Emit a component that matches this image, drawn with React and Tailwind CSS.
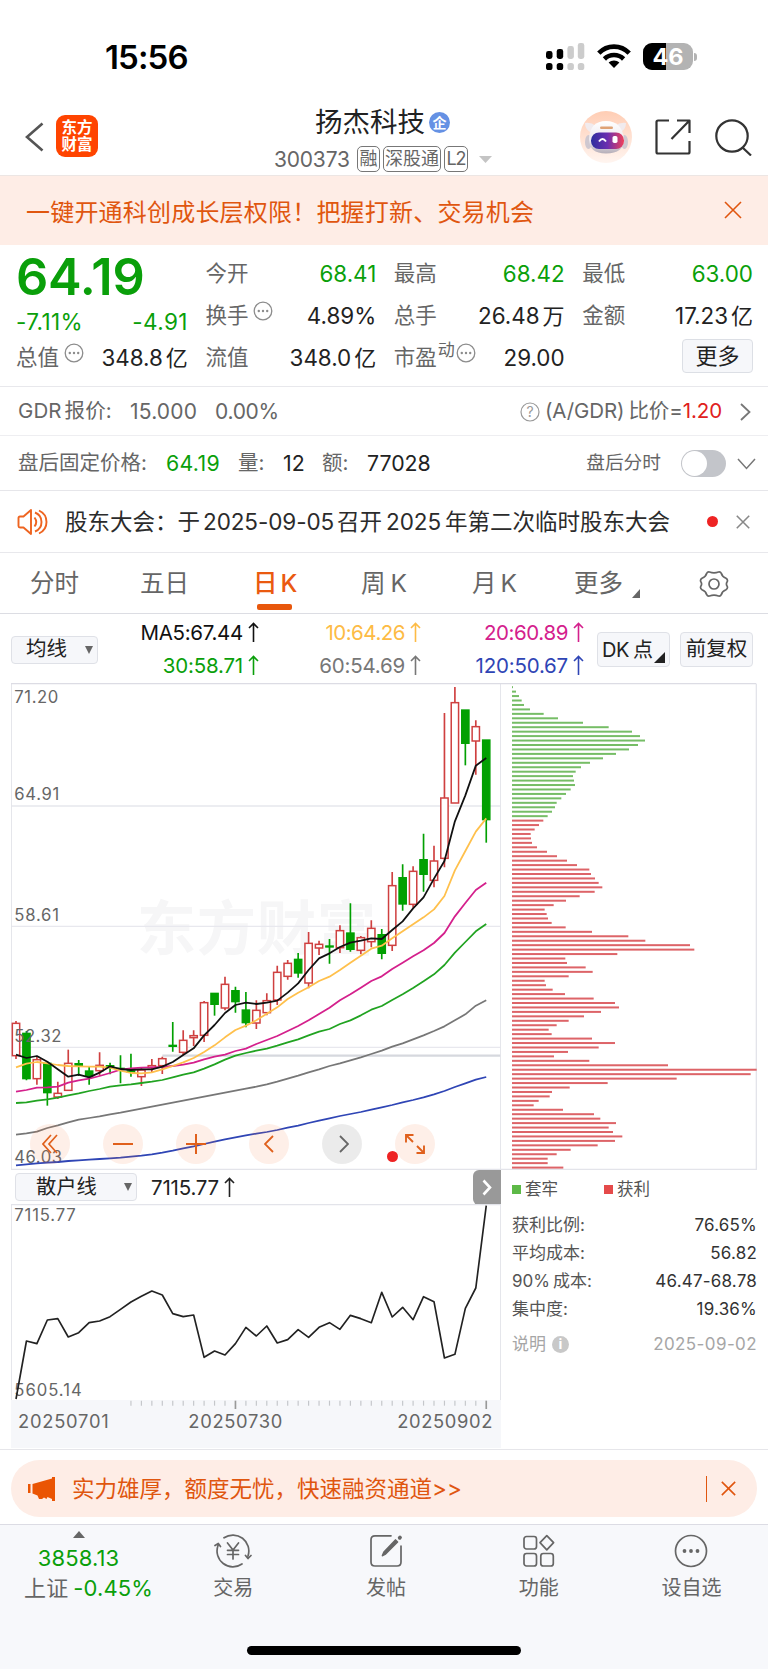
import React from 'react';

const STEP = 31.35;
const px = (i) => 48 + i * STEP;

// [high, top, bottom, low, rising]
const CANDLES = [
    [1023, 1030, 1127, 1137, 1], [1053, 1060, 1196, 1201, 0], [1130, 1139, 1196, 1214, 1], [1150, 1150, 1238, 1277, 0],
    [1205, 1240, 1251, 1257, 1], [1109, 1150, 1231, 1231, 1], [1140, 1151, 1156, 1188, 0], [1160, 1173, 1188, 1214, 0],
    [1117, 1156, 1172, 1187, 1], [1148, 1157, 1162, 1183, 0], [1126, 1165, 1168, 1210, 0], [1121, 1173, 1177, 1190, 0],
    [1165, 1170, 1190, 1218, 1], [1137, 1157, 1163, 1178, 1], [1130, 1136, 1157, 1182, 1], [1026, 1096, 1099, 1115, 0],
    [1051, 1081, 1117, 1125, 1], [1051, 1067, 1073, 1098, 1], [963, 968, 1066, 1086, 1], [940, 940, 973, 1007, 0],
    [890, 913, 984, 991, 1], [920, 932, 965, 998, 0], [936, 990, 1028, 1042, 0], [961, 991, 1029, 1047, 1],
    [940, 962, 998, 1006, 1], [857, 877, 960, 975, 1], [840, 850, 889, 899, 1], [819, 838, 879, 893, 0],
    [756, 790, 909, 925, 1], [782, 793, 804, 825, 1], [777, 798, 801, 851, 0], [736, 752, 803, 819, 1],
    [670, 759, 808, 815, 0], [768, 773, 811, 823, 1], [721, 745, 785, 802, 1], [747, 764, 820, 838, 0],
    [576, 617, 796, 813, 1], [553, 593, 672, 692, 0], [559, 574, 673, 683, 1], [461, 539, 583, 635, 0],
    [497, 543, 601, 622, 1], [99, 354, 535, 562, 1], [21, 68, 369, 369, 1], [90, 90, 190, 256, 0],
    [121, 140, 183, 284, 1], [180, 180, 419, 488, 0],
];

const AVERAGES = [
    { color: '#2f45b5', data: [1456, 1453, 1450, 1448, 1446, 1443, 1441, 1439, 1437, 1435, 1433, 1430, 1427, 1423, 1418, 1412, 1405, 1399, 1392, 1385, 1378, 1372, 1366, 1361, 1356, 1350, 1343, 1337, 1329, 1322, 1315, 1308, 1302, 1296, 1289, 1282, 1275, 1267, 1260, 1252, 1243, 1233, 1221, 1210, 1199, 1191] },
    { color: '#777777', data: [1364, 1360, 1355, 1344, 1336, 1327, 1319, 1314, 1309, 1303, 1298, 1292, 1286, 1280, 1274, 1268, 1262, 1256, 1250, 1244, 1238, 1232, 1226, 1220, 1213, 1205, 1196, 1187, 1177, 1168, 1158, 1150, 1141, 1132, 1122, 1112, 1100, 1090, 1078, 1066, 1053, 1039, 1021, 1003, 977, 961] },
    { color: '#21a321', data: [1269, 1267, 1262, 1258, 1253, 1246, 1240, 1233, 1227, 1220, 1216, 1213, 1209, 1205, 1200, 1192, 1184, 1177, 1166, 1153, 1139, 1127, 1119, 1112, 1106, 1097, 1087, 1078, 1066, 1055, 1047, 1032, 1021, 1006, 989, 978, 960, 943, 924, 904, 883, 855, 818, 786, 754, 732] },
    { color: '#d4208c', data: [1235, 1230, 1223, 1222, 1220, 1208, 1201, 1196, 1188, 1179, 1169, 1165, 1163, 1162, 1161, 1158, 1154, 1148, 1138, 1130, 1124, 1113, 1106, 1092, 1080, 1068, 1053, 1038, 1021, 1002, 983, 961, 943, 923, 903, 889, 867, 848, 829, 811, 789, 759, 709, 669, 630, 608] },
    { color: '#ffc04c', data: [1162, 1151, 1146, 1150, 1155, 1158, 1159, 1160, 1160, 1163, 1172, 1179, 1180, 1177, 1168, 1158, 1147, 1134, 1116, 1096, 1072, 1050, 1037, 1021, 1001, 982, 957, 938, 922, 903, 890, 870, 848, 827, 806, 797, 775, 754, 733, 712, 688, 648, 571, 513, 455, 415] },
    { color: '#111111', data: [1124, 1134, 1128, 1145, 1168, 1190, 1184, 1192, 1178, 1159, 1167, 1170, 1168, 1168, 1160, 1146, 1125, 1105, 1066, 1035, 999, 975, 968, 972, 968, 962, 938, 910, 870, 835, 820, 801, 788, 782, 775, 777, 750, 724, 685, 652, 596, 543, 424, 346, 257, 234] },
];

const RETAIL = [717, 543, 551, 480, 476, 531, 518, 488, 483, 470, 448, 426, 409, 393, 405, 461, 470, 465, 592, 573, 585, 551, 502, 528, 498, 549, 539, 509, 532, 502, 488, 508, 466, 476, 488, 397, 471, 442, 479, 410, 425, 594, 583, 445, 384, 137];

const CHIPS = [
    3, 12, 21, 29, 36, 54, 95, 138, 213, 290, 360, 384, 399, 378, 351, 312, 273, 234, 207, 191, 183, 186, 189, 176, 162, 148, 134, 129, 120, 107,
    94, 81, 68, 56, 57, 60, 75, 105, 135, 165, 195, 232, 237, 249, 260, 271, 248, 203, 162, 125, 98, 104, 108, 119, 161,
    240, 349, 400, 534, 547, 316, 160, 165, 221, 242, 170, 98, 102, 122, 159, 245, 309, 321, 267, 216, 170, 134, 110, 119, 240,
    309, 260, 168, 126, 232, 468, 734, 716, 494, 287, 173, 120, 113, 80, 65, 153, 246, 265, 312, 290, 303, 331, 309, 257, 176, 134, 107, 107, 154,
];

const toPoints = (data) => data.map((y, i) => `${px(i)},${y}`).join(' ');

const Close = ({ size, width = 1.6, className = '' }) => (
    <svg width={size} height={size} viewBox="0 0 18 18" fill="none" stroke="currentColor" strokeWidth={width} className={className}>
        <path d="M1 1L17 17M17 1L1 17" />
    </svg>
);

const Dots = ({ className = '' }) => (
    <svg width="20" height="20" viewBox="0 0 20 20" className={`text-[#8c8c8c] shrink-0 ${className}`}>
        <circle cx="10" cy="10" r="8.8" fill="none" stroke="currentColor" strokeWidth="1.3" />
        <circle cx="5.8" cy="10" r="1.2" fill="currentColor" />
        <circle cx="10" cy="10" r="1.2" fill="currentColor" />
        <circle cx="14.2" cy="10" r="1.2" fill="currentColor" />
    </svg>
);

const StatusBar = () => (
    <div className="h-[104px] flex items-start justify-between pl-[105px] pr-[71px] pt-[43px]">
        <div className="h-[28px] flex items-center text-[33px] font-semibold tracking-[-0.900px] text-black">15:56</div>
        <div className="flex items-start">
            <svg width="39" height="27" viewBox="0 0 39 27" className="mr-[12px]">
                <rect x="0" y="8" width="6.5" height="8" rx="2.4" />
                <rect x="10.7" y="6" width="6.5" height="10" rx="2.4" />
                <rect x="21.4" y="3" width="6.5" height="13" rx="2.4" fill="#cccccc" />
                <rect x="31.8" y="0" width="6.5" height="16" rx="2.4" fill="#cccccc" />
                <rect x="0" y="20" width="6.5" height="7" rx="2.6" />
                <rect x="10.7" y="20" width="6.5" height="7" rx="2.6" />
                <rect x="21.4" y="20" width="6.5" height="7" rx="2.6" fill="#cccccc" />
                <rect x="31.8" y="20" width="6.5" height="7" rx="2.6" fill="#cccccc" />
            </svg>
            <svg width="34" height="26" viewBox="0 0 34 26" fill="none" stroke="#000" strokeWidth="4.6" className="mr-[12px]">
                <path d="M1.8 10.2C10.2 1.4 23.8 1.4 32.2 10.2" />
                <path d="M7.4 16C12.7 10.7 21.3 10.7 26.6 16" />
                <path d="M17 25L11.6 19.6C14.6 16.8 19.4 16.8 22.4 19.6Z" fill="#000" stroke="none" />
            </svg>
            <div className="relative w-[50px] h-[27px] rounded-[9px] overflow-hidden bg-[#b3b3b3]">
                <div className="w-[23px] h-full bg-black" />
                <div className="absolute inset-0 pt-[1px] flex items-center justify-center text-[23.500px] font-bold text-white">46</div>
            </div>
            <div className="w-[3px] h-[8px] mt-[10px] ml-[1px] rounded-r-full bg-[#b3b3b3]" />
        </div>
    </div>
);

const Robot = () => (
    <svg width="52" height="52" viewBox="0 0 52 52">
        <defs>
            <linearGradient id="halo" x1="0" y1="0" x2="0" y2="1">
                <stop offset="0" stopColor="#ffcdb4" />
                <stop offset="1" stopColor="#fff5f0" />
            </linearGradient>
            <linearGradient id="visor" x1="0" y1="0" x2="1" y2="0">
                <stop offset="0" stopColor="#2c2f9e" />
                <stop offset="0.5" stopColor="#6b2fb0" />
                <stop offset="1" stopColor="#f0405a" />
            </linearGradient>
            <linearGradient id="shell" x1="0" y1="0" x2="0" y2="1">
                <stop offset="0" stopColor="#ffffff" />
                <stop offset="0.6" stopColor="#ece8ee" />
                <stop offset="1" stopColor="#b5aeb8" />
            </linearGradient>
        </defs>
        <circle cx="26" cy="26" r="26" fill="url(#halo)" />
        <path d="M5 12Q11 11 16 15L10 21Q5 18 5 12ZM46 12Q40 11 35 15L41 21Q46 18 46 12Z" fill="#f1ebee" />
        <ellipse cx="8.5" cy="31" rx="3.5" ry="7" fill="#cfc8d0" />
        <ellipse cx="44.5" cy="31" rx="3.5" ry="7" fill="#cfc8d0" />
        <path d="M9 28Q10 10 26 10Q42 10 44 28Q44 42.5 26 42.5Q9 42.5 9 28Z" fill="url(#shell)" />
        <rect x="20" y="15.5" width="13" height="2.6" rx="1.3" fill="#dfa275" />
        <rect x="11" y="21.5" width="33" height="16.5" rx="8" fill="url(#visor)" />
        <path d="M19 30.5Q22.5 25.5 26 30.5" fill="none" stroke="#fff" strokeWidth="1.9" />
        <rect x="32.5" y="25" width="5" height="7" rx="1.8" fill="#fff" />
    </svg>
);

const Header = () => (
    <div className="h-[71px] flex items-center justify-between pl-[25px] pr-[17px] relative">
        <div className="flex items-center">
            <svg width="19" height="30" viewBox="0 0 19 30" fill="none" stroke="#555" strokeWidth="2.6" className="mt-[-5px]">
                <path d="M17.5 1.5L2 15L17.5 28.5" />
            </svg>
            <div className="ml-[12px] mt-[-7px] w-[42px] h-[42px] rounded-[9px] bg-[#ff4400] text-white text-[15.500px] leading-[17.500px] font-bold flex flex-col items-center justify-center">
                <span>东方</span>
                <span>财富</span>
            </div>
        </div>
        <div className="absolute left-[274px] top-[3px] w-[220px]">
            <div className="flex items-center h-[31px] pl-[41px]">
                <span className="text-[27.500px] text-[#222]">扬杰科技</span>
                <span className="ml-[4px] w-[21px] h-[21px] rounded-full bg-[#6591e4] text-white text-[14px] font-bold flex items-center justify-center">企</span>
            </div>
            <div className="flex items-center h-[28px] mt-[7px] text-[#666]">
                <span className="w-[83px] text-[21px] tracking-[-0.200px]">300373</span>
                <span className="h-[26px] w-[23px] mr-[3px] border border-[#777] rounded-[5px] text-[18px] flex items-center justify-center">融</span>
                <span className="h-[26px] w-[58px] mr-[3px] border border-[#777] rounded-[5px] text-[18px] flex items-center justify-center">深股通</span>
                <span className="h-[26px] w-[24px] border border-[#777] rounded-[5px] text-[18px] tracking-[-1px] flex items-center justify-center">L2</span>
                <svg width="13" height="7" viewBox="0 0 13 7" className="ml-[11px]"><path d="M0 0H13L6.5 7Z" fill="#c4c4c4" /></svg>
            </div>
        </div>
        <div className="flex items-center mt-[-5px]">
            <Robot />
            <svg width="36" height="36" viewBox="0 0 36 36" fill="none" stroke="#333" strokeWidth="2.2" strokeLinejoin="round" className="ml-[23px]">
                <path d="M14 1.5H3Q1.5 1.5 1.5 3V33Q1.5 34.5 3 34.5H33Q34.5 34.5 34.5 33V22" />
                <path d="M22 1.5H34.5V14M34 2L16.5 20" />
            </svg>
            <svg width="37" height="37" viewBox="0 0 37 37" fill="none" stroke="#333" strokeWidth="2.2" className="ml-[24px] mr-[-1px]">
                <circle cx="17" cy="17" r="15.7" />
                <path d="M27.5 28.5L36 36.5" />
            </svg>
        </div>
    </div>
);

const Banner = () => (
    <div className="h-[70px] flex items-center justify-between bg-[#feede6] border-t border-[#ece6e4] pl-[26px] pr-[26px] text-[#e0560f]">
        <span className="mt-[4px] text-[24px] tracking-[0.200px] whitespace-nowrap">一键开通科创成长层权限！把握打新、交易机会</span>
        <Close size={18} className="mt-[-2px]" />
    </div>
);

const Cell = ({ label, value, green, extra }) => (
    <div className="h-[42px] flex items-center justify-between text-[22.400px]">
        <span className="flex items-center text-[#666] text-[21.500px]">{label}{extra}</span>
        <span className={green ? 'text-[#0a9f0a]' : 'text-[#222]'}>{value}</span>
    </div>
);

const Unit = ({ n, u }) => (
    <>{n}<span className="ml-[3px] text-[22px]">{u}</span></>
);

const Quote = () => (
    <div className="h-[142px] grid grid-cols-4 gap-x-[17.500px] pl-[17px] pr-[15px] pt-[8px] border-b border-[#e8e8ec]">
        <div>
            <div className="h-[48px] pt-[1px] ml-[-1px] flex items-center text-[50.500px] font-semibold tracking-[-0.200px] text-[#0a9f0a]">64.19</div>
            <div className="h-[42px] flex items-center justify-between text-[22.500px] tracking-[0.400px] text-[#0a9f0a]">
                <span className="ml-[-1px]">-7.11%</span>
                <span>-4.91</span>
            </div>
            <div className="mt-[-6px] ml-[-1px]">
                <Cell label="总值" extra={<Dots className="ml-[5px] mt-[-10px]" />} value={<Unit n="348.8" u="亿" />} />
            </div>
        </div>
        <div>
            <Cell label="今开" value="68.41" green />
            <Cell label="换手" extra={<Dots className="ml-[5px] mt-[-10px]" />} value="4.89%" />
            <Cell label="流值" value={<Unit n="348.0" u="亿" />} />
        </div>
        <div>
            <Cell label="最高" value="68.42" green />
            <Cell label="总手" value={<Unit n="26.48" u="万" />} />
            <Cell label="市盈" extra={<><span className="text-[17px] mt-[-16px] ml-[1px]">动</span><Dots className="ml-[1px] mt-[-10px]" /></>} value="29.00" />
        </div>
        <div>
            <Cell label="最低" value="63.00" green />
            <Cell label="金额" value={<Unit n="17.23" u="亿" />} />
            <div className="h-[42px] flex items-center justify-end">
                <div className="mt-[-4px] w-[71px] h-[34px] rounded-[4px] border border-[#dcdfe5] bg-[#f6f7fa] text-[22px] text-[#222] flex items-center justify-center">更多</div>
            </div>
        </div>
    </div>
);

const GdrRow = () => (
    <div className="h-[49px] pt-[1px] flex items-center border-b border-[#eeeef1] pl-[18px] pr-[17px] text-[20.500px] text-[#666]">
        <span className="w-[112px] tracking-[0.100px]">GDR<span className="ml-[3px]">报价:</span></span>
        <span className="w-[85px] text-[21px] tracking-[0.200px]">15.000</span>
        <span className="text-[21px] tracking-[-0.300px]">0.00%</span>
        <svg width="20" height="20" viewBox="0 0 20 20" className="ml-auto">
            <circle cx="10" cy="10" r="9" fill="none" stroke="#999" strokeWidth="1.2" />
            <text x="10" y="14.8" fontSize="14" fill="#999" textAnchor="middle">?</text>
        </svg>
        <span className="ml-[5px] tracking-[-0.100px]">(A/GDR)<span className="ml-[4px]">比价=</span><span className="text-[#e02020]">1.20</span></span>
        <svg width="11" height="18" viewBox="0 0 11 18" fill="none" stroke="#777" strokeWidth="1.8" className="ml-[18px]"><path d="M1 1L9.5 9L1 17" /></svg>
    </div>
);

const AfterHours = () => (
    <div className="h-[55px] pt-[1px] flex items-center border-b border-[#e6e6ea] pl-[18px] pr-[12px] text-[20.500px] text-[#666]">
        <span className="w-[148px]">盘后固定价格:</span>
        <span className="w-[72px] text-[21.300px] text-[#0a9f0a] tracking-[0.300px]">64.19</span>
        <span className="w-[45px]">量:</span>
        <span className="w-[39px] text-[21.300px] text-[#222]">12</span>
        <span className="w-[45px]">额:</span>
        <span className="text-[21.300px] text-[#222]">77028</span>
        <span className="ml-auto text-[18.700px]">盘后分时</span>
        <div className="ml-[20px] w-[45px] h-[27px] rounded-full bg-[#c3c5ca] p-[1px]">
            <div className="w-[25px] h-[25px] rounded-full bg-white" />
        </div>
        <svg width="19" height="12" viewBox="0 0 19 12" fill="none" stroke="#777" strokeWidth="1.5" className="ml-[11px]"><path d="M1 1L9.5 10.5L18 1" /></svg>
    </div>
);

const Notice = () => (
    <div className="h-[62px] flex items-center border-b border-[#e8e8ec] pl-[17px] pr-[18px]">
        <svg width="31" height="26" viewBox="0 0 31 26" fill="none" stroke="#ee6420" strokeWidth="1.9" strokeLinejoin="round">
            <path d="M6.5 7.5H3Q1.5 7.5 1.5 9V17Q1.5 18.5 3 18.5H6.5L14 25V1Z" />
            <path d="M17.5 8.5Q21 13 17.5 17.5M18 3.5Q24.5 6 24.5 13Q24.5 20 18 22.5M22 1.5Q29.5 5 29.5 13Q29.5 21 22 24.5" />
        </svg>
        <span className="ml-[17px] mt-[1px] text-[22.500px] text-[#2b2b2b] whitespace-nowrap">股东大会：于<span className="mx-[3px] tracking-[-0.100px]">2025-09-05</span>召开<span className="mx-[4px] tracking-[-0.100px]">2025</span>年第二次临时股东大会</span>
        <span className="ml-auto w-[11px] h-[11px] rounded-full bg-[#ee2323]" />
        <Close size={14} width={2} className="ml-[18px] text-[#888]" />
    </div>
);

const Tabs = () => (
    <div className="h-[61px] pt-[1px] flex items-center border-b border-[#dcdde3] pl-[30px] text-[24.500px] text-[#666] whitespace-nowrap">
        <span className="w-[110px]">分时</span>
        <span className="w-[113px]">五日</span>
        <span className="w-[108px] h-full flex flex-col text-[#ea5a10] font-medium">
            <span className="h-[50px] pt-[9px] flex items-center">日<span className="ml-[3px]">K</span></span>
            <span className="ml-[4px] w-[35px] h-[6px] rounded-[2px] bg-[#e8570c]" />
        </span>
        <span className="w-[111px]">周<span className="ml-[5px]">K</span></span>
        <span className="w-[102px]">月<span className="ml-[4px]">K</span></span>
        <span>更多</span>
        <svg width="8" height="9" viewBox="0 0 8 9" className="ml-[9px] mt-[20px]"><path d="M8 0V9H0Z" fill="#666" /></svg>
        <svg width="30" height="28" viewBox="0 0 30 28" fill="none" stroke="#666" strokeWidth="1.7" strokeLinejoin="round" className="ml-[59px]">
            <path d="M10.5 2Q15 3.6 19.5 2Q21.5 1.6 22.3 3.3Q23 6.6 27 8.3Q29 9.5 28.3 11.5Q26.5 14 28.3 16.5Q29 18.5 27 19.7Q23 21.4 22.3 24.7Q21.5 26.4 19.5 26Q15 24.4 10.5 26Q8.5 26.4 7.7 24.7Q7 21.4 3 19.7Q1 18.5 1.7 16.5Q3.5 14 1.7 11.5Q1 9.5 3 8.3Q7 6.6 7.7 3.3Q8.5 1.6 10.5 2Z" />
            <circle cx="15" cy="14" r="5" />
        </svg>
    </div>
);

const Arrow = () => (
    <svg width="11" height="20" viewBox="0 0 11 20" fill="none" stroke="currentColor" strokeWidth="1.6" className="ml-[5px] inline-block align-[-2px]">
        <path d="M5.5 20V1.5M1 6L5.5 1.5L10 6" />
    </svg>
);

const Averages = () => (
    <div className="h-[69px] pt-[2px] flex items-center pl-[11px] pr-[15px] text-[20.500px]">
        <div className="w-[87px] h-[28px] rounded-[4px] border border-[#dfe1e7] bg-[#f6f7fa] flex items-center pl-[14px] text-[20.500px] text-[#222]">
            均线
            <svg width="8" height="8" viewBox="0 0 8 8" className="ml-[18px]"><path d="M0 0H8L4 8Z" fill="#666" /></svg>
        </div>
        <div className="w-[485px] grid grid-cols-[161px_162px_163px] text-right tracking-[-0.200px]">
            <span className="h-[33px] text-[#111] tracking-[-0.300px]">MA5:67.44<Arrow /></span>
            <span className="text-[#fdbb45] tracking-[-0.500px]">10:64.26<Arrow /></span>
            <span className="text-[#d4208c] tracking-[-0.400px]">20:60.89<Arrow /></span>
            <span className="text-[#0a9f0a]">30:58.71<Arrow /></span>
            <span className="text-[#777]">60:54.69<Arrow /></span>
            <span className="text-[#2f45b5]">120:50.67<Arrow /></span>
        </div>
        <div className="relative ml-[14px] w-[73px] h-[35px] shrink-0 rounded-[4px] border border-[#dfe1e7] bg-[#f6f7fa] text-[20px] text-[#222] flex items-center pl-[4px] tracking-[-0.500px]">
            DK<span className="ml-[4px]">点</span>
            <svg width="11" height="11" viewBox="0 0 11 11" className="absolute right-[4px] bottom-[3px]"><path d="M11 0V11H0Z" fill="#222" /></svg>
        </div>
        <div className="ml-[10px] w-[73px] h-[35px] shrink-0 rounded-[4px] border border-[#dfe1e7] bg-[#f6f7fa] text-[20.500px] text-[#222] flex items-center justify-center">前复权</div>
    </div>
);

const PRICES = [['71.20', 69, 132], ['64.91', 360, 135], ['58.61', 723, 134], ['52.32', 1087, 141], ['46.03', 1450, 143]];

const ROUND = 'w-[40px] h-[40px] rounded-full flex items-center justify-center';

const KLine = () => (
    <div className="relative w-[490px] h-[487px]">
        <svg width="490" height="487" viewBox="33 9 1470 1461" fill="none">
            <text x="410" y="810" fontSize="178" fontWeight="700" fill="#f6f6f7" textLength="718">东方财富</text>
            <path d="M33 378H1503" stroke="#e6e7ed" strokeWidth="5" />
            <path d="M33 739H1503M33 1102H1503" stroke="#e8e8ee" strokeWidth="3.5" />
            <path d="M487 1127H1503" stroke="#d6d8de" strokeWidth="7" />
            <path d="M34 12V1468H1502V12" stroke="#e3e4ea" strokeWidth="3.5" />
            <path d="M33 11H1503" stroke="#dcdce4" strokeWidth="4" />
            {CANDLES.map(([hi, top, bottom, lo, up], i) => (
                <g key={i} stroke={up ? '#cf4040' : '#02a002'} strokeWidth={up ? 4.5 : 4}>
                    <path d={`M${px(i)} ${hi}V${top}M${px(i)} ${bottom}V${lo}`} strokeWidth="5" />
                    <rect x={px(i) - 11} y={top} width="22" height={bottom - top} fill={up ? '#fff' : '#02a002'} />
                </g>
            ))}
            {PRICES.map(([label, y, w]) => (
                <text key={label} x="43" y={y} fontSize="50" fill="#666" textLength={w}>{label}</text>
            ))}
            {AVERAGES.map(({ color, data }) => (
                <polyline key={color} points={toPoints(data)} stroke={color} strokeWidth="5.3" strokeLinejoin="round" />
            ))}
        </svg>
        <div className="absolute left-[19px] bottom-[6px] flex gap-[33px] text-[#e0601c]">
            <div className={`${ROUND} bg-[#f97a40]/12`}>
                <svg width="16" height="20" viewBox="0 0 16 20" fill="none" stroke="currentColor" strokeWidth="1.7"><path d="M9 1L1 10L9 19M15 1L7 10L15 19" /></svg>
            </div>
            <div className={`${ROUND} bg-[#f97a40]/12`}>
                <svg width="20" height="20" viewBox="0 0 20 20" fill="none" stroke="currentColor" strokeWidth="2"><path d="M0 10H20" /></svg>
            </div>
            <div className={`${ROUND} bg-[#f97a40]/12`}>
                <svg width="20" height="20" viewBox="0 0 20 20" fill="none" stroke="currentColor" strokeWidth="2"><path d="M0 10H20M10 0V20" /></svg>
            </div>
            <div className={`${ROUND} bg-[#f97a40]/12`}>
                <svg width="10" height="18" viewBox="0 0 10 18" fill="none" stroke="currentColor" strokeWidth="1.8"><path d="M9 1L1 9L9 17" /></svg>
            </div>
            <div className={`${ROUND} bg-black/8 text-[#666]`}>
                <svg width="10" height="18" viewBox="0 0 10 18" fill="none" stroke="currentColor" strokeWidth="1.8" className="ml-[4px]"><path d="M1 1L9 9L1 17" /></svg>
            </div>
            <div className={`${ROUND} bg-[#f97a40]/12 relative`}>
                <svg width="20" height="20" viewBox="0 0 20 20" fill="none" stroke="currentColor" strokeWidth="1.9"><path d="M8.5 1H1V8.5M1 1L8 8M11.5 19H19V11.5M19 19L12 12" /></svg>
                <span className="absolute left-[-8px] top-[27px] w-[11px] h-[11px] rounded-full bg-[#ee2323]" />
            </div>
        </div>
    </div>
);

const RetailLine = () => (
    <>
        <div className="h-[34px] flex items-center pl-[4px]">
            <div className="w-[122px] h-[28px] rounded-[4px] border border-[#dfe1e7] bg-[#f6f7fa] flex items-center pl-[20px] text-[20.300px] text-[#222]">
                散户线
                <svg width="8" height="8" viewBox="0 0 8 8" className="ml-[27px]"><path d="M0 0H8L4 8Z" fill="#666" /></svg>
            </div>
            <span className="ml-[14px] mt-[1px] text-[20.500px] tracking-[-0.200px] text-[#222]">7115.77<Arrow /></span>
            <div className="ml-auto w-[28px] h-[35px] rounded-l-[6px] bg-[#999] flex items-center justify-center">
                <svg width="10" height="17" viewBox="0 0 10 17" fill="none" stroke="#fff" strokeWidth="2.6"><path d="M1.5 1.5L8 8.5L1.5 15.5" /></svg>
            </div>
        </div>
        <svg width="490" height="196" viewBox="33 132 1470 588" fill="none">
            <path d="M34 720V134H1502V720" stroke="#e3e4ea" strokeWidth="3.5" />
            <text x="43" y="184" fontSize="50" fill="#666" textLength="184">7115.77</text>
            <text x="43" y="709" fontSize="50" fill="#666" textLength="202">5605.14</text>
            <polyline points={toPoints(RETAIL)} stroke="#222" strokeWidth="5" strokeLinejoin="round" />
        </svg>
        <svg width="490" height="48" viewBox="33 720 1470 144" className="bg-[#f6f7fa]">
            {RETAIL.map((_, i) => i > 10 && (
                <path key={i} d={`M${px(i)} 722V${i === 21 || i === 45 ? 747 : 737}`} stroke={i === 21 || i === 45 ? '#999' : '#c4c6ca'} strokeWidth={i === 21 || i === 45 ? 5 : 3.5} />
            ))}
            <text x="54" y="803" fontSize="55" fill="#666" textLength="272">20250701</text>
            <text x="565" y="803" fontSize="55" fill="#666" textLength="282">20250730</text>
            <text x="1192" y="803" fontSize="55" fill="#666" textLength="285">20250902</text>
        </svg>
    </>
);

const Stat = ({ label, value }) => (
    <div className="h-[28px] flex items-center justify-between">
        <span className="text-[#555]">{label}</span>
        <span className="text-[17px] tracking-[0.200px] text-[#333]">{value}</span>
    </div>
);

const ChipPanel = () => (
    <div className="w-[256px]">
        <svg width="256" height="487" viewBox="1503 9 768 1461" fill="none">
            <path d="M1503 11H2269" stroke="#dcdce4" strokeWidth="4" />
            <path d="M2269 12V1468H1503" stroke="#e3e4ea" strokeWidth="4" />
            {CHIPS.map((w, i) => (
                <rect key={i} x="1536" y={18.5 + i * 13.345} width={w} height="6" fill={i < 30 ? '#76bd66' : '#dd6468'} />
            ))}
        </svg>
        <div className="pl-[11px] text-[17px] text-[#555]">
            <div className="h-[38px] flex items-center text-[16.500px]">
                <span className="w-[9px] h-[9px] bg-[#5db947]" />
                <span className="ml-[4px] w-[79px]">套牢</span>
                <span className="w-[9px] h-[9px] bg-[#e54a4a]" />
                <span className="ml-[4px]">获利</span>
            </div>
            <div className="pt-[3px]">
                <Stat label="获利比例:" value="76.65%" />
                <Stat label="平均成本:" value="56.82" />
                <Stat label={<>90%<span className="ml-[3px]">成本:</span></>} value="46.47-68.78" />
                <Stat label="集中度:" value="19.36%" />
            </div>
            <div className="mt-[6px] h-[30px] flex items-center text-[#a6a6a6]">
                <span>说明</span>
                <span className="ml-[6px] w-[17px] h-[17px] rounded-full bg-[#c8c8c8] text-white text-[14px] font-bold flex items-center justify-center">i</span>
                <span className="ml-auto tracking-[0.400px]">2025-09-02</span>
            </div>
        </div>
    </div>
);

const Promo = () => (
    <div className="h-[75px] pt-[10px] px-[11px] border-t border-[#e6e6ea]">
        <div className="h-[57px] rounded-full bg-[#feede6] flex items-center pl-[17px] pr-[21px] text-[#e0560f]">
            <svg width="27" height="24" viewBox="0 0 27 24" fill="#ea5504">
                <path d="M0 7H2.5V16H0ZM4.5 7L24 1.5V0H27V24H24V22L19.5 20L18.5 22L16 20.5L14 22H11L9.5 18.5L4.5 16.5Z" />
            </svg>
            <span className="ml-[17px] mt-[2px] text-[22.500px] whitespace-nowrap">实力雄厚，额度无忧，快速融资通道&gt;&gt;</span>
            <span className="ml-auto w-[1.500px] h-[26px] bg-[#e0560f]" />
            <Close size={15} width={1.9} className="ml-[14px]" />
        </div>
    </div>
);

const NavItem = ({ label, children }) => (
    <div className="flex flex-col items-center pt-[8px] w-[152.700px]">
        <svg width="38" height="36" viewBox="0 0 38 36" fill="none" stroke="#666" strokeWidth="1.7" strokeLinecap="round" strokeLinejoin="round">{children}</svg>
        <span className="mt-[9px] text-[20px] text-[#666]">{label}</span>
    </div>
);

const BottomNav = () => (
    <div className="h-[145px] bg-[#f7f8fb] border-t border-[#dcdce4] flex flex-col justify-between">
        <div className="flex">
            <div className="w-[157px] shrink-0 flex flex-col items-center text-[22px] tracking-[0.100px] text-[#0a9f0a]">
                <svg width="12" height="7" viewBox="0 0 12 7" className="mt-[6px]"><path d="M6 0L12 7H0Z" fill="#666" /></svg>
                <span className="h-[30px] mt-[5px] flex items-center">3858.13</span>
                <span className="h-[30px] flex items-center whitespace-nowrap pl-[20px]"><span className="text-[#666] mr-[5px]">上证</span>-0.45%</span>
            </div>
            <NavItem label="交易">
                <path d="M10 4.8A15.9 15.9 0 0 1 34 23M28 31A15.9 15.9 0 0 1 4 12.5M1 12.5L4.3 10.5L6.5 13.5M31.5 22.5L34 25.5L37 22.5" />
                <path d="M13.5 10L19 17L24.5 10M13.5 17.3H24.5M13.5 21.5H24.5M19 17V26" />
            </NavItem>
            <NavItem label="发帖">
                <path d="M24 2.8H8Q4 2.8 4 6.8V29Q4 33 8 33H30Q34 33 34 29V13" />
                <path d="M15.5 22.5L17 19L28.5 7L30.5 9L18.5 21Z" fill="#666" />
                <path d="M33 4.5L32.7 4.8" strokeWidth="3.8" />
            </NavItem>
            <NavItem label="功能">
                <rect x="4" y="3.5" width="12.5" height="12.5" rx="2.5" />
                <path d="M26.8 2.6L33.6 9.7L26.8 16.8L20 9.7Z" />
                <rect x="4" y="20.5" width="12.5" height="12.5" rx="2.5" />
                <rect x="20.8" y="20.5" width="12.5" height="12.5" rx="2.5" />
            </NavItem>
            <NavItem label="设自选">
                <circle cx="19" cy="18" r="15.5" />
                <g fill="#666" stroke="none">
                    <circle cx="12.5" cy="18" r="1.9" />
                    <circle cx="19" cy="18" r="1.9" />
                    <circle cx="25.5" cy="18" r="1.9" />
                </g>
            </NavItem>
        </div>
        <div className="mx-auto mb-[14px] w-[274px] h-[9px] rounded-full bg-black" />
    </div>
);

export default function App() {
    return (
        <div className="w-[768px] h-[1669px] overflow-hidden bg-white leading-none font-['Inter','Noto_Sans_CJK_SC',sans-serif]">
            <StatusBar />
            <Header />
            <Banner />
            <Quote />
            <GdrRow />
            <AfterHours />
            <Notice />
            <Tabs />
            <Averages />
            <div className="flex h-[766px] pl-[11px]">
                <div className="w-[490px] flex flex-col">
                    <KLine />
                    <RetailLine />
                </div>
                <ChipPanel />
            </div>
            <Promo />
            <BottomNav />
        </div>
    );
}
